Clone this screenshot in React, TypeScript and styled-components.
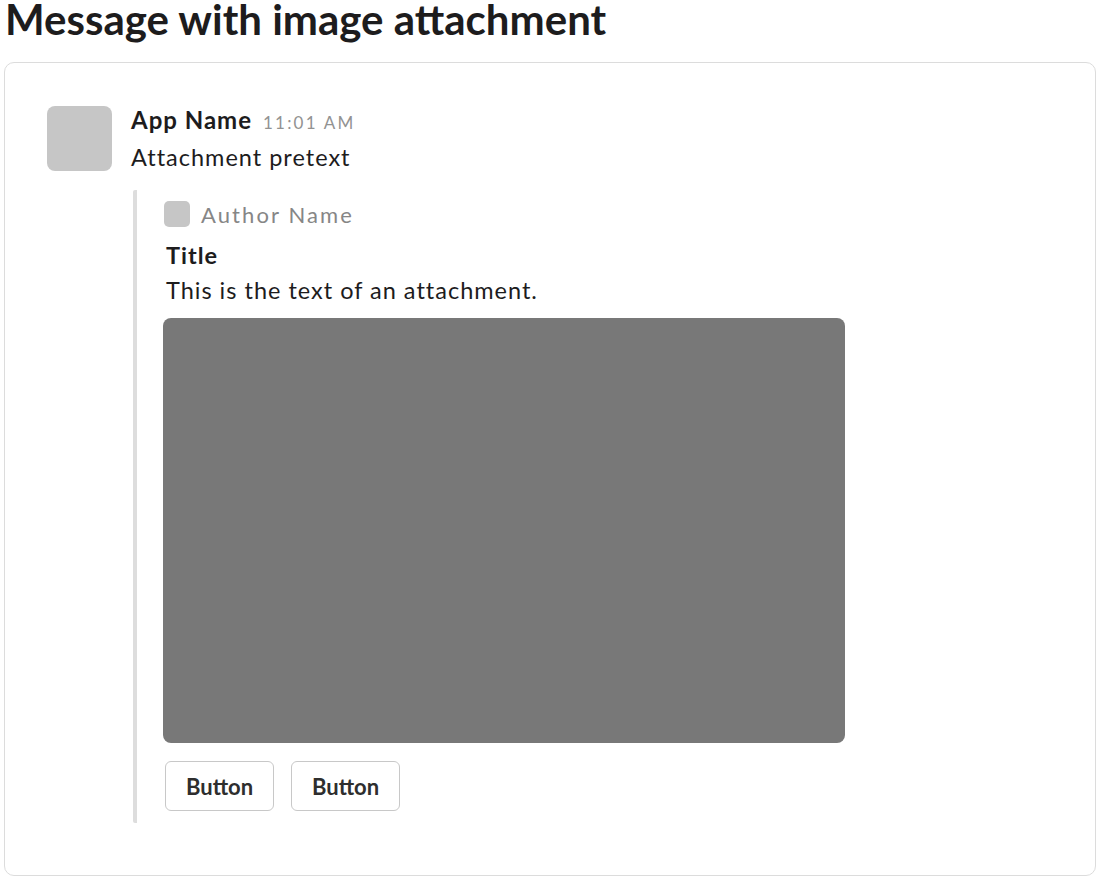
import React from "react";
import styled, { createGlobalStyle } from "styled-components";

const Global = createGlobalStyle`
  html, body { margin: 0; padding: 0; background: #ffffff; }
  body { font-family: Lato, "Noto Sans", sans-serif; color: #1d1c1d; }
`;

const Page = styled.div`
  padding: 0 4px;
  width: 1092px;
`;

const Heading = styled.h1`
  margin: 0;
  height: 62px;
  font-size: 42px;
  line-height: 38px;
  font-weight: 700;
  color: #1d1c1d;
  padding-left: 1px;
`;

const Card = styled.div`
  border: 1px solid #dcdcdc;
  border-radius: 10px;
  padding: 40px 42px 52px;
`;

const MessageRow = styled.div`
  display: flex;
  gap: 19px;
  align-items: flex-start;
`;

const Avatar = styled.div`
  width: 65px;
  height: 65px;
  margin-top: 3px;
  border-radius: 8px;
  background: #c6c6c6;
  flex: none;
`;

const Content = styled.div`
  display: flex;
  flex-direction: column;
`;

const Header = styled.div`
  display: flex;
  align-items: baseline;
  gap: 11px;
  line-height: 32px;
  margin-top: 1px;
`;

const AppName = styled.span`
  font-size: 24px;
  font-weight: 700;
  letter-spacing: 1px;
`;

const Time = styled.span`
  font-size: 17px;
  letter-spacing: 2.2px;
  color: #929292;
`;

const Text = styled.div<{ $bold?: boolean; $lh?: number }>`
  font-size: 23.5px;
  line-height: ${(p) => p.$lh ?? 36}px;
  letter-spacing: 1px;
  font-weight: ${(p) => (p.$bold ? 700 : 400)};
`;

const AttachText = styled(Text)`
  padding-left: 3px;
`;

const Attachment = styled.div`
  margin: 15px 0 0 2px;
  border-left: 4px solid #dddddd;
  border-radius: 2px;
  padding: 6px 0 12px 26px;
  display: flex;
  flex-direction: column;
`;

const AuthorRow = styled.div`
  display: flex;
  align-items: center;
  gap: 11px;
  height: 36px;
  margin-bottom: 7px;
  padding-left: 1px;
`;

const AuthorIcon = styled.div`
  width: 26px;
  height: 26px;
  border-radius: 5px;
  background: #c6c6c6;
`;

const AuthorName = styled.span`
  font-size: 22px;
  letter-spacing: 2.1px;
  color: #868686;
`;

const ImageBox = styled.div`
  margin-top: 10px;
  width: 682px;
  height: 425px;
  border-radius: 8px;
  background: #787878;
`;

const Actions = styled.div`
  display: flex;
  gap: 17px;
  margin-top: 18px;
  padding-left: 2px;
`;

const Button = styled.button`
  width: 109px;
  height: 50px;
  border: 1px solid #c8c8c8;
  border-radius: 6px;
  background: #ffffff;
  font-family: Lato, "Noto Sans", sans-serif;
  font-size: 22px;
  font-weight: 700;
  color: #2e2e2e;
  padding: 0;
`;

export default function App() {
  return (
    <Page>
      <Global />
      <Heading>Message with image attachment</Heading>
      <Card>
        <MessageRow>
          <Avatar />
          <Content>
            <Header>
              <AppName>App Name</AppName>
              <Time>11:01 AM</Time>
            </Header>
            <Text>Attachment pretext</Text>
            <Attachment>
              <AuthorRow>
                <AuthorIcon />
                <AuthorName>Author Name</AuthorName>
              </AuthorRow>
              <AttachText $bold $lh={33}>Title</AttachText>
              <AttachText>This is the text of an attachment.</AttachText>
              <ImageBox />
              <Actions>
                <Button>Button</Button>
                <Button>Button</Button>
              </Actions>
            </Attachment>
          </Content>
        </MessageRow>
      </Card>
    </Page>
  );
}
